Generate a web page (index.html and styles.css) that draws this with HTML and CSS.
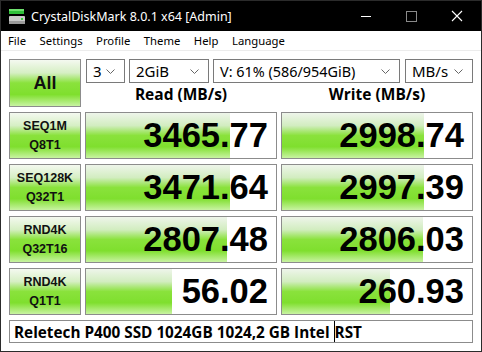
FILE: index.html
```html
<!DOCTYPE html>
<html lang="en">

<head>
    <meta charset="UTF-8">
    <title>CrystalDiskMark 8.0.1 x64 [Admin]</title>
    <link rel="stylesheet" href="styles.css">
</head>

<body>
    <div class="window">
        <div class="titlebar">
            <svg class="app-icon" width="18" height="16" viewBox="0 0 18 16">
                <rect x="0" y="0" width="15" height="5" fill="#2fbf3a"/>
                <rect x="0" y="0" width="15" height="2" fill="#6ee06e"/>
                <rect x="0" y="7" width="16" height="8" rx="1" fill="#c9c9c9"/>
                <rect x="0" y="12" width="16" height="3" fill="#9a9a9a"/>
                <rect x="12" y="9" width="2" height="2" fill="#3bd43b"/>
            </svg>
            <span class="title">CrystalDiskMark 8.0.1 x64 [Admin]</span>
            <div class="controls">
                <svg class="ctl" viewBox="0 0 46 30"><line x1="18" y1="15.5" x2="28" y2="15.5" stroke="#fff" stroke-width="1"/></svg>
                <svg class="ctl" viewBox="0 0 46 30"><rect x="17.5" y="10.5" width="10" height="10" fill="none" stroke="#8a8a8a" stroke-width="1"/></svg>
                <svg class="ctl" viewBox="0 0 46 30"><path d="M17 10 L27 20 M27 10 L17 20" stroke="#fff" stroke-width="1.1"/></svg>
            </div>
        </div>

        <div class="menubar">
            <span>File</span>
            <span>Settings</span>
            <span>Profile</span>
            <span>Theme</span>
            <span>Help</span>
            <span>Language</span>
        </div>

        <div class="client">
            <div class="btn all">All</div>

            <div class="top">
                <div class="selects">
                    <div class="select sel-count"><span>3</span><svg width="9" height="5" viewBox="0 0 9 5"><path d="M0.5 0.5 L4.5 4.5 L8.5 0.5" fill="none" stroke="#666" stroke-width="1"/></svg></div>
                    <div class="select sel-size"><span>2GiB</span><svg width="9" height="5" viewBox="0 0 9 5"><path d="M0.5 0.5 L4.5 4.5 L8.5 0.5" fill="none" stroke="#666" stroke-width="1"/></svg></div>
                    <div class="select sel-drive"><span>V: 61% (586/954GiB)</span><svg width="9" height="5" viewBox="0 0 9 5"><path d="M0.5 0.5 L4.5 4.5 L8.5 0.5" fill="none" stroke="#666" stroke-width="1"/></svg></div>
                    <div class="select sel-unit"><span>MB/s</span><svg width="9" height="5" viewBox="0 0 9 5"><path d="M0.5 0.5 L4.5 4.5 L8.5 0.5" fill="none" stroke="#666" stroke-width="1"/></svg></div>
                </div>
                <div class="heads">
                    <div class="head">Read (MB/s)</div>
                    <div class="head">Write (MB/s)</div>
                </div>
            </div>

            <div class="btn label"><span>SEQ1M</span><span>Q8T1</span></div>
            <div class="result"><div class="fill" style="width: 75.8%"></div><span class="num">3465.77</span></div>
            <div class="result"><div class="fill" style="width: 74.7%"></div><span class="num">2998.74</span></div>

            <div class="btn label"><span>SEQ128K</span><span>Q32T1</span></div>
            <div class="result"><div class="fill" style="width: 75.8%"></div><span class="num">3471.64</span></div>
            <div class="result"><div class="fill" style="width: 74.7%"></div><span class="num">2997.39</span></div>

            <div class="btn label"><span>RND4K</span><span>Q32T16</span></div>
            <div class="result"><div class="fill" style="width: 74.2%"></div><span class="num">2807.48</span></div>
            <div class="result"><div class="fill" style="width: 74.2%"></div><span class="num">2806.03</span></div>

            <div class="btn label"><span>RND4K</span><span>Q1T1</span></div>
            <div class="result"><div class="fill" style="width: 45.3%"></div><span class="num">56.02</span></div>
            <div class="result"><div class="fill" style="width: 56.8%"></div><span class="num">260.93</span></div>

            <div class="comment">Reletech P400 SSD 1024GB 1024,2 GB Intel <span class="caret"></span>RST</div>
        </div>
    </div>
</body>

</html>
```

FILE: styles.css
```css
body {
    margin: 0;
    background-color: #ffffff;
    font-family: 'Liberation Sans', Arial, sans-serif;
}

.window {
    width: 482px;
    height: 352px;
    box-sizing: border-box;
    border: 1px solid #2b2b2b;
    background-color: #ffffff;
    overflow: hidden;
}

/* title bar */
.titlebar {
    height: 30px;
    background-color: #000000;
    display: flex;
    align-items: center;
    color: #ffffff;
}

.app-icon {
    flex: none;
    margin-left: 8px;
    margin-top: 1px;
}

.title {
    margin-left: 4px;
    font-size: 12.5px;
    font-family: 'Noto Sans', sans-serif;
    white-space: nowrap;
}

.controls {
    margin-left: auto;
    display: flex;
    flex: none;
}

.ctl {
    display: block;
    flex: none;
    width: 46px;
    height: 30px;
}

/* menu */
.menubar {
    height: 19px;
    display: flex;
    align-items: center;
    gap: 13.5px;
    padding-left: 7px;
    font-size: 11.3px;
    font-family: 'Noto Sans', sans-serif;
    color: #000;
    border-bottom: 1px solid #ececec;
}

/* main grid */
.client {
    display: grid;
    grid-template-columns: 72px 192px 192px;
    grid-template-rows: 48px 47px 47px 47px 47px 23px;
    column-gap: 4px;
    row-gap: 5px;
    padding: 8px 0 0 8px;
}

.btn {
    box-sizing: border-box;
    border: 1px solid #8c8c8c;
    background: linear-gradient(#f4f9f0 0%, #d6efc4 28%, #8ae23c 50%, #7fdf2e 75%, #c8f3a2 100%);
    display: flex;
    flex-direction: column;
    align-items: center;
    justify-content: center;
    color: #111;
    font-weight: bold;
}

.all {
    font-size: 18px;
}

.label {
    font-size: 12.5px;
    gap: 5px;
}

.top {
    grid-column: 2 / 4;
    display: flex;
    flex-direction: column;
}

.selects {
    display: flex;
    height: 24px;
    margin-left: 1px;
}

.select {
    box-sizing: border-box;
    border: 1px solid #7a7a7a;
    display: flex;
    align-items: center;
    justify-content: space-between;
    padding: 0 9px 0 6px;
    font-size: 15px;
    font-family: 'Noto Sans', sans-serif;
    color: #000;
    margin-right: 4px;
}

.sel-count { width: 39px; }
.sel-size { width: 80px; }
.sel-drive { width: 187px; margin-right: 5px; font-size: 14.4px; }
.sel-unit { width: 68px; margin-right: 0; }

.heads {
    display: grid;
    grid-template-columns: 192px 192px;
    column-gap: 4px;
    height: 24px;
}

.head {
    display: flex;
    justify-content: center;
    align-items: flex-end;
    padding-bottom: 2px;
    font-size: 15.5px;
    font-weight: bold;
    font-family: 'Open Sans', sans-serif;
    color: #000;
}

/* result boxes */
.result {
    position: relative;
    box-sizing: border-box;
    border: 1px solid #8c8c8c;
    background-color: #ffffff;
    display: flex;
    align-items: center;
    justify-content: flex-end;
    padding-right: 8px;
}

.fill {
    position: absolute;
    left: 0;
    top: 0;
    bottom: 0;
    background: linear-gradient(#eef5ea 0%, #d2edc0 28%, #8ae23c 50%, #7fdf2e 75%, #c8f3a2 100%);
}

.num {
    position: relative;
    font-size: 34.5px;
    font-weight: bold;
    color: #000;
    line-height: 1;
}

.comment {
    grid-column: 1 / 4;
    box-sizing: border-box;
    border: 1px solid #8c8c8c;
    display: flex;
    align-items: center;
    padding-left: 4px;
    font-size: 15.3px;
    font-weight: bold;
    font-family: 'Open Sans', sans-serif;
    color: #000;
    white-space: pre;
}

.caret {
    width: 1px;
    height: 21px;
    background-color: #000;
}
```
